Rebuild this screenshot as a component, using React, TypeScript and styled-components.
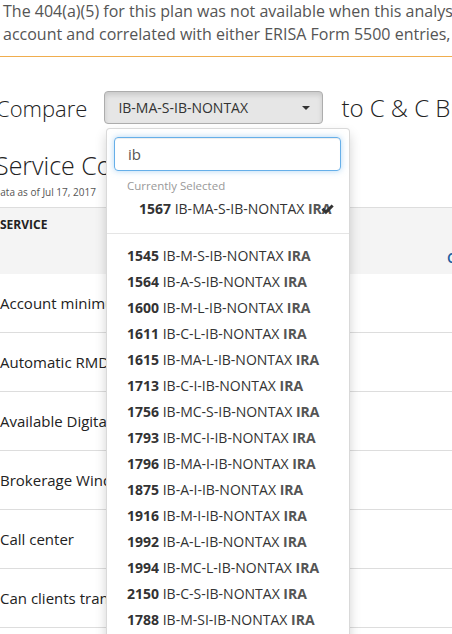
import React from 'react';
import styled, { createGlobalStyle } from 'styled-components';

const GlobalStyle = createGlobalStyle`
  html, body {
    margin: 0;
    padding: 0;
    background: #fff;
  }
  body {
    width: 452px;
    height: 634px;
    overflow: hidden;
    font-family: "Open Sans", "Noto Sans", sans-serif;
    color: #333;
  }
  * {
    box-sizing: border-box;
  }
`;

const Page = styled.div`
  position: relative;
  width: 452px;
  height: 634px;
  overflow: hidden;
`;

const Notice = styled.p`
  margin: 0;
  padding: 0 0 10px 3px;
  font-size: 16px;
  line-height: 23px;
  color: #555;
  white-space: nowrap;
  border-bottom: 1px solid #f0ad4e;
`;

const CompareRow = styled.div`
  display: flex;
  align-items: center;
  height: 33px;
  margin-top: 34px;
  position: relative;
`;

const CompareLabel = styled.span`
  flex: none;
  font-size: 22px;
  font-weight: 300;
  color: #222;
  margin-left: -4px;
  white-space: nowrap;
`;

const SelectButton = styled.div`
  flex: none;
  display: flex;
  align-items: center;
  justify-content: space-between;
  width: 219px;
  height: 33px;
  margin-left: 17px;
  padding: 0 12px 0 13px;
  font-size: 14px;
  color: #333;
  white-space: nowrap;
  background: #e6e6e6;
  border: 1px solid #adadad;
  border-radius: 4px;
  box-shadow: inset 0 3px 5px rgba(0, 0, 0, 0.125);
`;

const Caret = styled.span`
  width: 0;
  height: 0;
  border-top: 4px solid #333;
  border-left: 4px solid transparent;
  border-right: 4px solid transparent;
`;

const ToLabel = styled(CompareLabel)`
  font-size: 24px;
  margin-left: 18px;
`;

const Menu = styled.div`
  position: absolute;
  top: 37px;
  left: 106px;
  width: 244px;
  z-index: 10;
  padding: 8px 0 0;
  background: #fff;
  border: 1px solid rgba(0, 0, 0, 0.15);
  border-radius: 4px;
  box-shadow: 0 6px 12px rgba(0, 0, 0, 0.175);
`;

const SearchInput = styled.div`
  height: 34px;
  margin: 0 8px 0 7px;
  padding: 0 13px;
  display: flex;
  align-items: center;
  font-size: 15px;
  color: #555;
  border: 1px solid #66afe9;
  border-radius: 4px;
  box-shadow: inset 0 1px 1px rgba(0, 0, 0, 0.075), 0 0 6px rgba(102, 175, 233, 0.5);
`;

const GroupHeader = styled.div`
  padding: 5px 20px 0;
  height: 25px;
  line-height: 20px;
  font-size: 11.5px;
  color: #999;
`;

const Item = styled.div<{ $indent?: boolean }>`
  position: relative;
  height: 26px;
  line-height: 26px;
  padding-left: ${(p) => (p.$indent ? '32px' : '20px')};
  font-size: 14px;
  color: #333;
  white-space: nowrap;
`;

const Num = styled.b`
  font-weight: 700;
  color: #333;
`;

const Tag = styled.b`
  font-weight: 700;
  color: #555;
`;

const Check = styled.svg`
  position: absolute;
  right: 15px;
  top: 8px;
`;

const Divider = styled.div`
  height: 1px;
  margin: 11px 0 9px;
  background: #e5e5e5;
`;

const Title = styled.h2`
  margin: 24px 0 0 -5px;
  font-size: 25px;
  font-weight: 300;
  line-height: 34px;
  color: #222;
  white-space: nowrap;
`;

const DataNote = styled.div`
  margin: 2px 0 0 -7px;
  font-size: 10px;
  line-height: 16px;
  color: #555;
  white-space: nowrap;
`;

const Table = styled.div`
  margin-top: 7px;
  border-top: 1px solid #ddd;
`;

const HeaderRow = styled.div`
  display: flex;
  height: 66px;
  background: #f4f4f4;
`;

const HeaderCell = styled.div<{ $wide?: boolean }>`
  flex: none;
  width: ${(p) => (p.$wide ? '447px' : 'auto')};
  padding-top: 8px;
  font-size: 12px;
  font-weight: 700;
  color: #222;
  white-space: nowrap;
`;

const HeaderLink = styled.div`
  flex: none;
  align-self: flex-end;
  padding-bottom: 7px;
  font-size: 14px;
  font-weight: 600;
  color: #1c5f9f;
  white-space: nowrap;
`;

const Row = styled.div`
  display: flex;
  align-items: center;
  height: 59px;
  border-bottom: 1px solid #ddd;
  font-size: 15px;
  color: #222;
  white-space: nowrap;
`;

const options: [string, string][] = [
  ['1545', 'IB-M-S-IB-NONTAX'],
  ['1564', 'IB-A-S-IB-NONTAX'],
  ['1600', 'IB-M-L-IB-NONTAX'],
  ['1611', 'IB-C-L-IB-NONTAX'],
  ['1615', 'IB-MA-L-IB-NONTAX'],
  ['1713', 'IB-C-I-IB-NONTAX'],
  ['1756', 'IB-MC-S-IB-NONTAX'],
  ['1793', 'IB-MC-I-IB-NONTAX'],
  ['1796', 'IB-MA-I-IB-NONTAX'],
  ['1875', 'IB-A-I-IB-NONTAX'],
  ['1916', 'IB-M-I-IB-NONTAX'],
  ['1992', 'IB-A-L-IB-NONTAX'],
  ['1994', 'IB-MC-L-IB-NONTAX'],
  ['2150', 'IB-C-S-IB-NONTAX'],
  ['1788', 'IB-M-SI-IB-NONTAX'],
  ['1790', 'IB-A-SI-IB-NONTAX'],
];

const services = [
  'Account minimums',
  'Automatic RMD',
  'Available Digital Tools',
  'Brokerage Window',
  'Call center',
  'Can clients transfer',
];

const App: React.FC = () => {
  return (
    <Page>
      <GlobalStyle />
      <Notice>
        The 404(a)(5) for this plan was not available when this analysis was prepared.
        <br />
        account and correlated with either ERISA Form 5500 entries, or other sources.
      </Notice>

      <CompareRow>
        <CompareLabel>Compare</CompareLabel>
        <SelectButton>
          IB-MA-S-IB-NONTAX
          <Caret />
        </SelectButton>
        <ToLabel>to C &amp; C Brokerage</ToLabel>

        <Menu>
          <SearchInput>ib</SearchInput>
          <GroupHeader>Currently Selected</GroupHeader>
          <Item $indent>
            <Num>1567</Num> IB-MA-S-IB-NONTAX <Tag>IRA</Tag>
            <Check width="13" height="11" viewBox="0 0 13 11">
              <path d="M0.4 5.8 L2.5 3.7 L4.9 6.1 L10.6 0.4 L12.7 2.5 L4.9 10.3 Z" fill="#333" />
            </Check>
          </Item>
          <Divider />
          {options.map(([num, name]) => (
            <Item key={num}>
              <Num>{num}</Num> {name} <Tag>IRA</Tag>
            </Item>
          ))}
        </Menu>
      </CompareRow>

      <Title>Service Comparison</Title>
      <DataNote>Data as of Jul 17, 2017</DataNote>

      <Table>
        <HeaderRow>
          <HeaderCell $wide>SERVICE</HeaderCell>
          <HeaderLink>C &amp; C Brokerage</HeaderLink>
        </HeaderRow>
        {services.map((s) => (
          <Row key={s}>{s}</Row>
        ))}
      </Table>
    </Page>
  );
};

export default App;
